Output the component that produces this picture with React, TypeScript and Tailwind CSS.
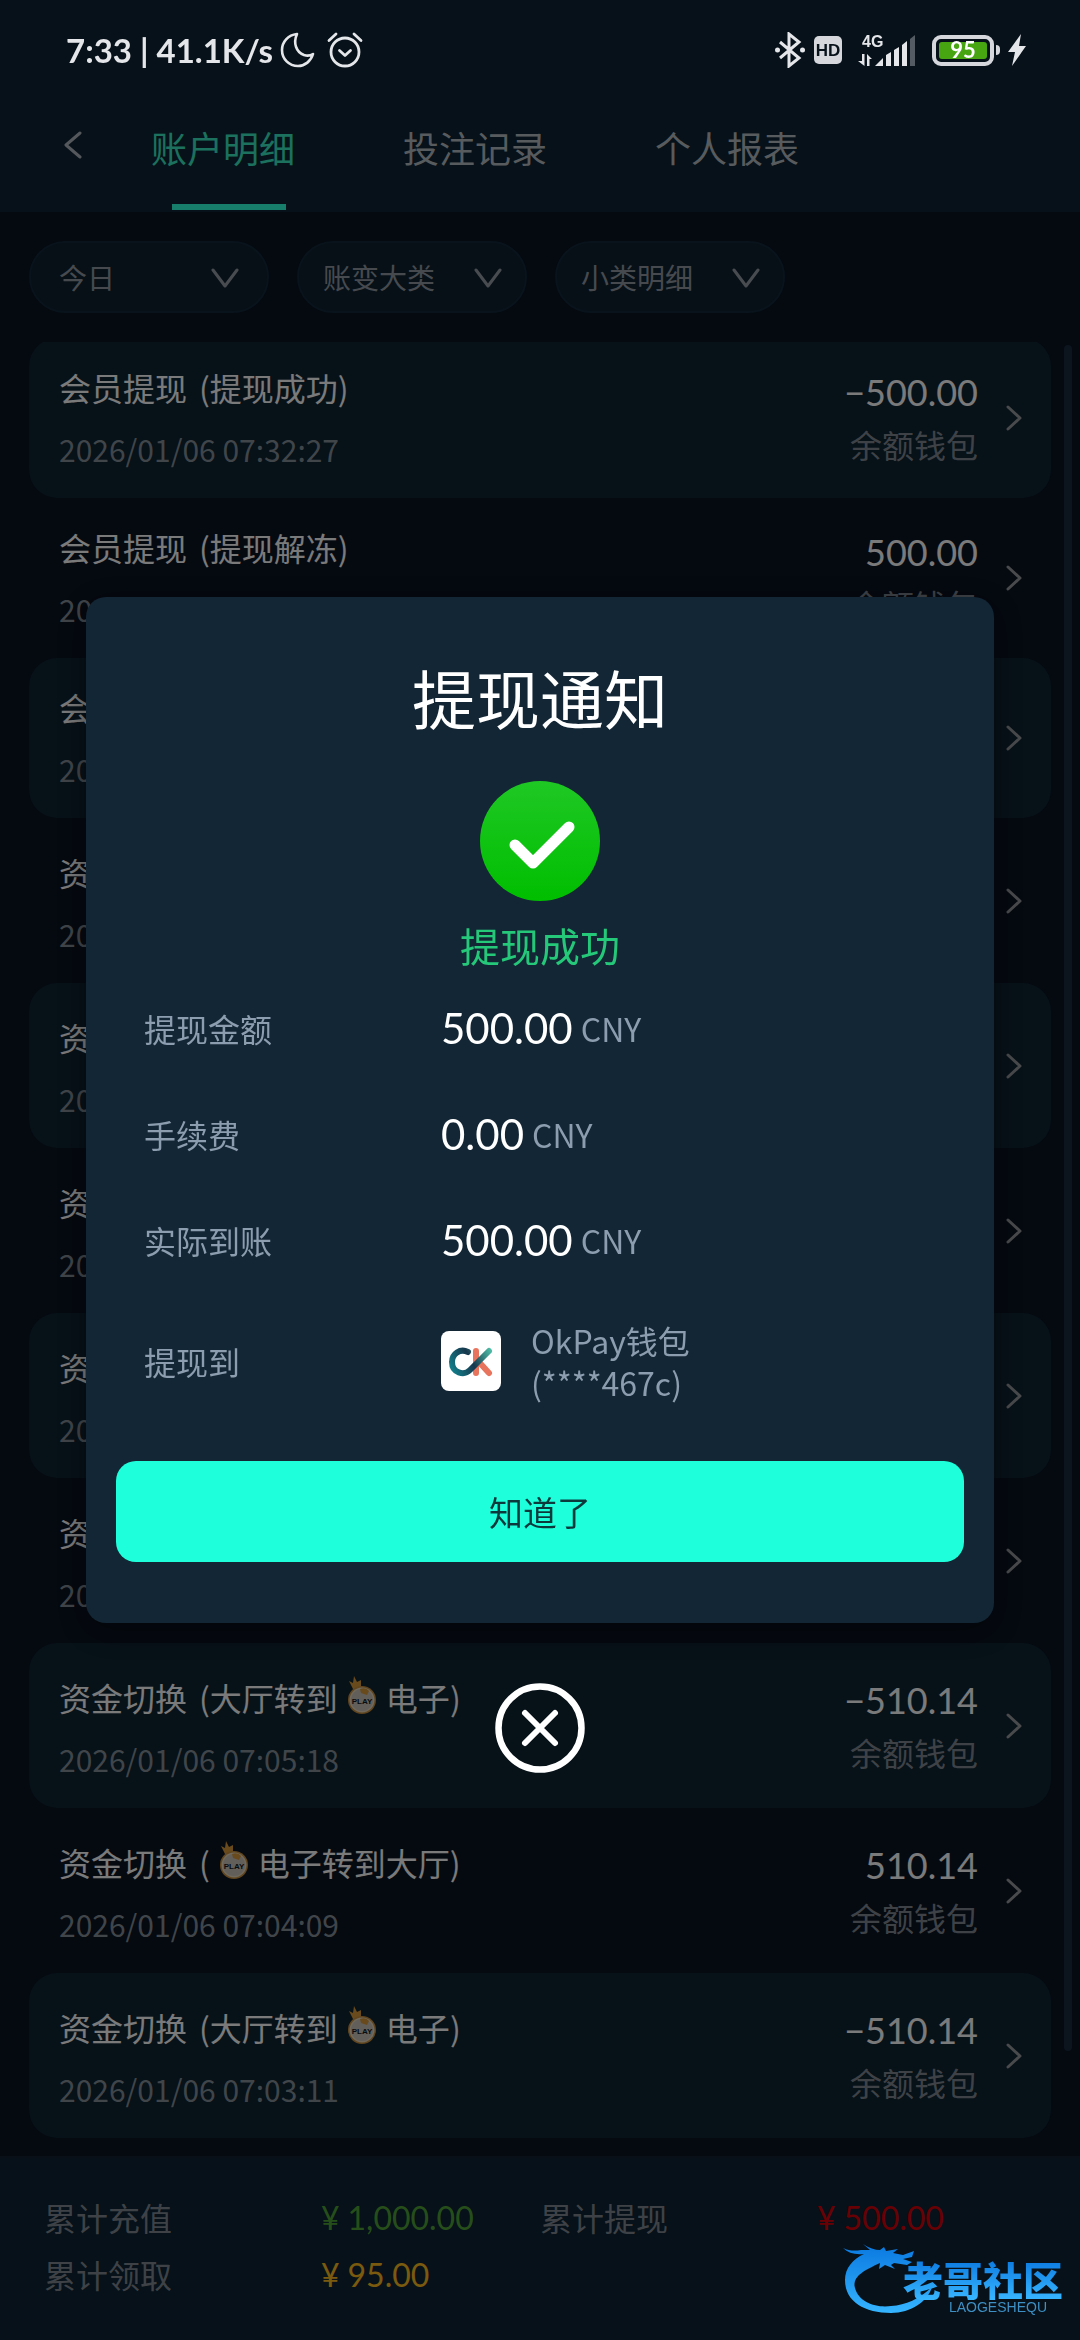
import { useState, type ReactNode } from 'react'

/**
 * AccountDetailPage — account ledger with the withdrawal notice on top.
 * The ledger is dimmed by the scrim, the device status bar stays bright.
 */

const TABS = ['账户明细', '投注记录', '个人报表']

const FILTERS = [
  { label: '今日', box: 'w-60', pad: 'px-7', arrow: 'right-[30px]' },
  { label: '账变大类', box: 'w-[230px]', pad: 'px-6', arrow: 'right-[25px]' },
  { label: '小类明细', box: 'w-[230px]', pad: 'px-6', arrow: 'right-[25px]' },
]

type Row = {
  kind: string
  before?: string
  play?: boolean
  after?: string
  time: string
  amount: string
}

const ROWS: Row[] = [
  { kind: '会员提现', before: '提现成功', time: '2026/01/06 07:32:27', amount: '−500.00' },
  { kind: '会员提现', before: '提现解冻', time: '2026/01/06 07:32:27', amount: '500.00' },
  { kind: '会员提现', before: '提现冻结', time: '2026/01/06 07:30:12', amount: '−500.00' },
  { kind: '资金切换', play: true, after: '电子转到大厅', time: '2026/01/06 07:29:40', amount: '510.14' },
  { kind: '资金切换', before: '大厅转到', play: true, after: '电子', time: '2026/01/06 07:20:31', amount: '−510.14' },
  { kind: '资金切换', play: true, after: '电子转到大厅', time: '2026/01/06 07:18:22', amount: '510.14' },
  { kind: '资金切换', before: '大厅转到', play: true, after: '电子', time: '2026/01/06 07:10:45', amount: '−510.14' },
  { kind: '资金切换', play: true, after: '电子转到大厅', time: '2026/01/06 07:06:02', amount: '510.14' },
  { kind: '资金切换', before: '大厅转到', play: true, after: '电子', time: '2026/01/06 07:05:18', amount: '−510.14' },
  { kind: '资金切换', play: true, after: '电子转到大厅', time: '2026/01/06 07:04:09', amount: '510.14' },
  { kind: '资金切换', before: '大厅转到', play: true, after: '电子', time: '2026/01/06 07:03:11', amount: '−510.14' },
]

const TOTALS = [
  { label: '累计充值', value: '1,000.00', color: 'text-[#4c9c34]' },
  { label: '累计提现', value: '500.00', color: 'text-[#d00008]' },
  { label: '累计领取', value: '95.00', color: 'text-[#f4b41c]' },
]

function StatusBar() {
  return (
    <div className="absolute inset-x-0 top-0 z-30 flex h-[88px] items-center justify-between pt-3 pr-[54px] pl-[66px] text-[#e4e6ea]">
      <div className="flex items-center">
        <span className="text-[33px] leading-none font-bold font-['Lato','Noto_Sans_CJK_SC',sans-serif]">7:33 | 41.1K/s</span>
        <svg className="ml-1.5 h-9 w-9" viewBox="0 0 36 36" fill="none" stroke="currentColor" strokeWidth="2.6" strokeLinejoin="round">
          <path d="M18 2C9 3 3 10 3 18c0 9 7 16 16 16 7 0 13-5 15-12-3 2-6 2-9 1-8-3-11-12-7-21Z" />
        </svg>
        <svg className="ml-3 h-9 w-9" viewBox="0 0 36 36" fill="none" stroke="currentColor" strokeWidth="2.8" strokeLinecap="round" strokeLinejoin="round">
          <circle cx="18" cy="20" r="14" />
          <path d="m12.500 18.500 5.500 5 5.500-5M2 8.500l7-6.500M34 8.500 27 2" />
        </svg>
      </div>
      <div className="flex items-center">
        <svg className="h-9 w-8" viewBox="0 0 32 36" fill="none" stroke="currentColor" strokeWidth="3">
          <path d="M6 10 25 26 15 34V2l10 8L6 26" />
          <circle cx="3.500" cy="18" r="2.500" fill="currentColor" stroke="none" />
          <circle cx="28.500" cy="18" r="2.500" fill="currentColor" stroke="none" />
        </svg>
        <span className="ml-2 flex h-7 w-7 items-center justify-center rounded-[5px] bg-[#d5d7dd] text-[17px] leading-none font-bold text-[#08121a] font-['Liberation_Sans',sans-serif]">
          HD
        </span>
        <svg className="ml-4 h-[34px] w-[58px]" viewBox="0 -2 58 34" fill="currentColor">
          <text x="4" y="12" fontSize="16" fontWeight="700" fontFamily="Liberation Sans, sans-serif">4G</text>
          <path d="M4 19h2.500v12L0 26h4zM9 31V19l5 5h-2.500v7zM17 31l8-8v8zM28 20l5-3v14h-5zM36 15l5-3v19h-5zM44 10l5-4v25h-5z" />
          <path d="m52 4 5-4v31h-5z" opacity=".35" />
        </svg>
        <span className="ml-4 flex h-[31px] w-[62px] items-center justify-center rounded-[9px] border-4 border-[#d5d7dd] p-[3px]">
          <span className="flex h-full w-full items-center justify-center rounded-[3px] bg-[#46a511] text-[22px] leading-none font-bold text-white font-['Lato',sans-serif]">
            95
          </span>
        </span>
        <span className="ml-0.5 h-2.5 w-1 rounded-r bg-[#d5d7dd]" />
        <svg className="ml-2 h-8 w-[18px]" viewBox="0 0 18 32" fill="currentColor">
          <path d="M13 0 0 18h7L4 32 18 12h-7z" />
        </svg>
      </div>
    </div>
  )
}

function PlayIcon() {
  return (
    <svg className="mx-2.5 h-[38px] w-7 self-center" viewBox="0 0 28 38" role="img" aria-label="PLAY">
      <path d="M5 13 1 5l4 2 1-7 3 6 4-2v6l3 2-5 3z" fill="#d0943a" />
      <circle cx="14" cy="24" r="14" fill="#c08a3c" />
      <circle cx="14" cy="24" r="12.500" fill="#e0d2b8" />
      <circle cx="14" cy="24" r="11" fill="#c4beb4" />
      <path d="M12 13q6-2 9 2l-2 4-6-2z" fill="#d0943a" />
      <text x="14" y="28" textAnchor="middle" fontSize="8" fontWeight="700" fill="#101820" fontFamily="Liberation Sans, sans-serif">
        PLAY
      </text>
    </svg>
  )
}

function Ledger() {
  return (
    <main className="relative min-h-0 flex-1 overflow-hidden px-[29px]">
      <ul className="-mt-1">
        {ROWS.map((row, i) => (
          <li key={i} className={'rounded-[28px] ' + (i % 2 === 0 ? 'bg-[#0e2230]' : '')}>
            <button className="flex w-full items-center pr-[29px] pl-[30px] text-left">
              <div className="flex-1 py-[29px]">
                <p className={'flex items-end text-[32px] leading-10 text-[#f4f4f6] ' + (row.play ? 'h-[45px]' : 'h-10')}>
                  <span className="mr-3">{row.kind}</span>
                  <span>({row.before}</span>
                  {row.play && <PlayIcon />}
                  <span>{row.after})</span>
                </p>
                <p className="mt-[22px] text-[30px] leading-10 text-[#808a94]">{row.time}</p>
              </div>
              <div className="text-right">
                <p className="text-[36px] leading-[52px] text-[#f4f4f6] font-['Lato',sans-serif]">{row.amount}</p>
                <p className="text-[32px] leading-[52px] text-[#7c848e]">余额钱包</p>
              </div>
              <svg className="ml-7 h-[26px] w-4" viewBox="0 0 16 26" fill="none" stroke="#909498" strokeWidth="3" strokeLinecap="round" strokeLinejoin="round">
                <path d="m2 2 12 11L2 24" />
              </svg>
            </button>
          </li>
        ))}
      </ul>
      {/* scroll thumb */}
      <div className="absolute top-[3px] right-2 bottom-[105px] w-2 rounded-full bg-[#18283c]" />
    </main>
  )
}

function NoticeRow({ label, className = 'h-[106px]', children }: { label: string; className?: string; children: ReactNode }) {
  return (
    <div className={'flex items-center ' + className}>
      <dt className="w-[297px] text-[32px] leading-[42px]">{label}</dt>
      <dd className="flex items-center">{children}</dd>
    </div>
  )
}

function Money({ value }: { value: string }) {
  return (
    <>
      <span className="text-[42px] leading-[42px] text-white font-['Lato',sans-serif]">{value}</span>
      <span className="ml-2 text-[32px] leading-[42px]">CNY</span>
    </>
  )
}

function OkPayLogo() {
  return (
    <svg className="h-[60px] w-[60px] rounded-lg bg-white" viewBox="0 0 60 60" fill="none" strokeWidth="6" strokeLinecap="round">
      <defs>
        <linearGradient id="okpay" x1="10" y1="40" x2="50" y2="18" gradientUnits="userSpaceOnUse">
          <stop stopColor="#12808c" />
          <stop offset=".5" stopColor="#17384e" />
          <stop offset="1" stopColor="#4fc0a8" />
        </linearGradient>
      </defs>
      <path d="M35 20v22M38 31l10 11" stroke="#e8745e" />
      <path d="M27 21C19 17 11 23 11 31c0 11 12 14 18 8L48 20" stroke="url(#okpay)" />
    </svg>
  )
}

function WithdrawNotice({ onClose }: { onClose: () => void }) {
  return (
    <div className="fixed inset-0 z-20 flex flex-col items-center justify-center bg-black/50 px-[86px] pt-[30px]">
      <section role="dialog" aria-label="提现通知" className="flex w-full flex-col items-center rounded-[20px] bg-[#132635] px-[30px] pt-[67px] pb-[61px] text-[#8b9dae] shadow-[0_8px_30px_rgba(0,0,0,0.4)]">
        <h1 className="text-[64px] leading-[64px] text-white">提现通知</h1>
        <svg className="mt-[53px] h-[120px] w-[120px]" viewBox="0 0 120 120" fill="none">
          <defs>
            <linearGradient id="success" x1="0" y1="0" x2="0" y2="1">
              <stop stopColor="#1fc824" />
              <stop offset="1" stopColor="#00be00" />
            </linearGradient>
          </defs>
          <circle cx="60" cy="60" r="60" fill="url(#success)" />
          <path d="m35 64 18 18 36-36" stroke="#fff" strokeWidth="11" strokeLinecap="round" strokeLinejoin="round" />
        </svg>
        <p className="mt-5 text-[40px] leading-[48px] text-[#25c879]">提现成功</p>

        <dl className="mt-1.5 w-full px-7">
          <NoticeRow label="提现金额"><Money value="500.00" /></NoticeRow>
          <NoticeRow label="手续费"><Money value="0.00" /></NoticeRow>
          <NoticeRow label="实际到账"><Money value="500.00" /></NoticeRow>
          <NoticeRow label="提现到" className="h-[136px]">
            <OkPayLogo />
            <span className="ml-[30px] text-[32px] leading-[42px]">
              OkPay钱包
              <br />
              (****467c)
            </span>
          </NoticeRow>
        </dl>

        <button onClick={onClose} className="mt-8 h-[101px] w-full rounded-[20px] bg-[#1effdb] text-[34px] text-[#0c3a3c]">
          知道了
        </button>
      </section>

      <button onClick={onClose} aria-label="关闭" className="mt-[60px]">
        <svg className="h-[90px] w-[90px]" viewBox="0 0 90 90" fill="none" stroke="#fff" strokeLinecap="round">
          <circle cx="45" cy="45" r="41.500" strokeWidth="6.500" />
          <path d="m30 30 30 30M60 30 30 60" strokeWidth="6" />
        </svg>
      </button>
    </div>
  )
}

function Watermark() {
  return (
    <div className="absolute right-[17px] bottom-[22px] z-30 flex items-end">
      <svg className="-mr-8 h-[76px] w-[92px]" viewBox="0 0 92 76" fill="none">
        <defs>
          <linearGradient id="dragon" x1="0" y1="0" x2="0" y2="1">
            <stop stopColor="#0a78e0" />
            <stop offset="1" stopColor="#35b4ff" />
          </linearGradient>
        </defs>
        <path
          d="M0 6c6 3 12 3 18 2h9l-7-6c6 4 12 6 17 6l4-3 2 4 12-2-5 4 10 2 11-4-2 6-9 2 9 3-5 3-13-2-3 2 4 4-10-4-6 4 1-6C22 28 9 34 12 46c4 15 22 20 36 18 15-1 28-7 41-19-4 14-21 26-41 26C22 71 2 60 2 38 2 26 10 17 21 12 12 13 5 11 0 6Z"
          fill="url(#dragon)"
        />
      </svg>
      <div className="mb-1 flex flex-col items-end">
        <span className="bg-gradient-to-b from-[#0a78e0] to-[#38b6ff] bg-clip-text text-[40px] leading-[42px] font-black text-transparent">老哥社区</span>
        <span className="mr-4 text-[14px] leading-[14px] text-[#3d8fc4] font-['Liberation_Sans',sans-serif]">LAOGESHEQU</span>
      </div>
    </div>
  )
}

export default function App() {
  const [tab, setTab] = useState(0)
  const [open, setOpen] = useState(true)

  return (
    <div className="relative flex h-dvh flex-col overflow-hidden bg-[#0a1220] font-['Noto_Sans_CJK_SC',sans-serif]">
      <StatusBar />

      <header className="bg-[#0e2232] pt-[88px]">
        <nav className="flex h-[124px] items-center pl-16">
          <button aria-label="返回" className="w-[87px] pb-2.5">
            <svg className="h-7 w-[18px]" viewBox="0 0 18 28" fill="none" stroke="#a8b0b8" strokeWidth="3" strokeLinecap="round" strokeLinejoin="round">
              <path d="M16 2 2 14l14 12" />
            </svg>
          </button>
          <div className="flex h-full gap-[108px]">
            {TABS.map((name, i) => (
              <button
                key={name}
                onClick={() => setTab(i)}
                className={'relative pb-1.5 text-[36px] ' + (tab === i ? 'text-[#38e0bc]' : 'text-[#b0b6bc]')}
              >
                {name}
                {tab === i && <span className="absolute bottom-0.5 left-[21px] h-1.5 w-[114px] bg-[#30fcd8]" />}
              </button>
            ))}
          </div>
        </nav>
      </header>

      <div className="flex gap-7 p-[29px]">
        {FILTERS.map((f) => (
          <label key={f.label} className={'relative ' + f.box}>
            <select
              aria-label={f.label}
              className={'h-[72px] w-full appearance-none rounded-full border-2 border-[#122636] bg-[#0e202e] text-[28px] text-[#8c949e] ' + f.pad}
            >
              <option>{f.label}</option>
            </select>
            <svg className={'pointer-events-none absolute top-[27px] h-5 w-7 ' + f.arrow} viewBox="0 0 28 20" fill="none" stroke="#9098a0" strokeWidth="3" strokeLinecap="round" strokeLinejoin="round">
              <path d="m2 2 12 16L26 2" />
            </svg>
          </label>
        ))}
      </div>

      <Ledger />

      <footer className="border-t-2 border-[#12202e] bg-[#0e2232] px-11 pt-[31px] pb-[37px]">
        <dl className="grid grid-cols-2 text-[32px] leading-[57px]">
          {TOTALS.map((t) => (
            <div key={t.label} className="flex">
              <dt className="w-[277px] text-[#7c848e]">{t.label}</dt>
              <dd className={"flex gap-2 font-['Lato',sans-serif] " + t.color}>
                <span>¥</span>
                <span>{t.value}</span>
              </dd>
            </div>
          ))}
        </dl>
      </footer>

      {open && <WithdrawNotice onClose={() => setOpen(false)} />}
      <Watermark />
    </div>
  )
}
